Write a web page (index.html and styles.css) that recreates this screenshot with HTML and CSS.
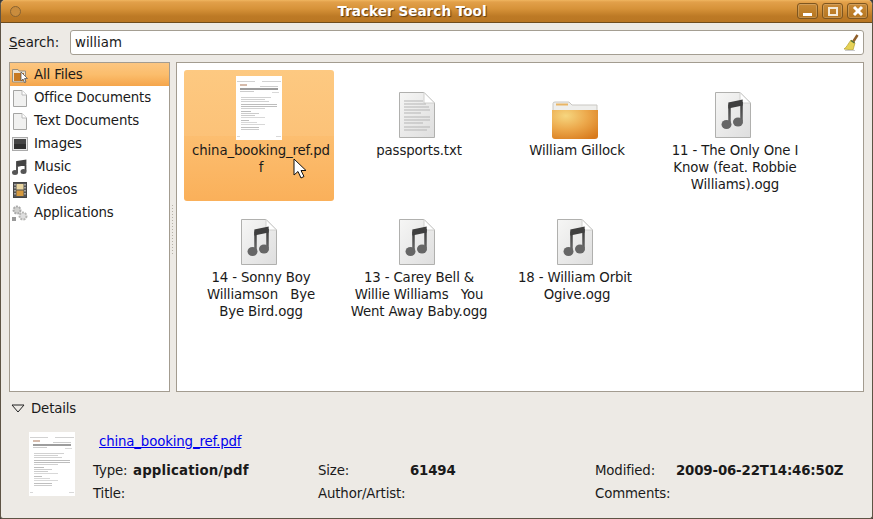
FILE: index.html
```html
<!DOCTYPE html>
<html lang="en">
  <head>
    <meta charset="utf-8">
    <title>Tracker Search Tool</title>
    <link rel="stylesheet" href="styles.css">
  </head>
  <body>
    <svg class="defs" width="0" height="0">
      <defs>
        <linearGradient id="pageFill" x1="0" y1="0" x2="1" y2="1">
          <stop offset="0" stop-color="#f6f6f5"/>
          <stop offset="1" stop-color="#dedede"/>
        </linearGradient>
        <radialGradient id="folderFill" cx=".3" cy=".2" r=".95">
          <stop offset="0" stop-color="#f6d67f"/>
          <stop offset=".5" stop-color="#eca84b"/>
          <stop offset="1" stop-color="#d87a1c"/>
        </radialGradient>
        <linearGradient id="noteFill" x1="0" y1="0" x2="0" y2="1">
          <stop offset="0" stop-color="#3a3a3a"/>
          <stop offset="1" stop-color="#6a6a6a"/>
        </linearGradient>
        <symbol id="page" viewBox="0 0 36 46">
          <path d="M.5.5H25L35.5 11V45.500H.5Z" fill="url(#pageFill)" stroke="#b0b0ae"/>
          <path d="M25 .5V11H35.500Z" fill="#fff" stroke="#d0d0ce"/>
        </symbol>
        <symbol id="musicdoc" viewBox="0 0 36 46">
          <use href="#page" width="36" height="46"/>
          <path d="M14.500 12.500V32M26.500 10V29" stroke="url(#noteFill)" stroke-width="2.500" fill="none"/>
          <path d="M13.300 10.500 27.700 7.500V13.500L13.300 16.500Z" fill="#3f3f3f"/>
          <ellipse cx="11.500" cy="32.500" rx="5" ry="4.500" fill="#666"/>
          <ellipse cx="23" cy="30" rx="5" ry="4.500" fill="#666"/>
        </symbol>
        <symbol id="thumb" viewBox="0 0 46 64">
          <rect width="46" height="64" fill="#fff"/>
          <g class="thumb-lines" fill="#a8a8a8" opacity=".75">
            <rect x="1" y="5" width="18" height="1" fill="#c4c4c4"/>
            <rect x="26" y="5" width="19" height="1" fill="#c4c4c4"/>
            <rect x="4" y="8" width="7" height="2" fill="#c9a58f"/>
            <rect x="24" y="10" width="18" height="1" fill="#bbb"/>
            <rect x="4" y="12" width="38" height="2" fill="#7d7d7d"/>
            <rect x="4" y="15" width="14" height="1" fill="#bbb"/>
            <rect x="36" y="16" width="7" height="1" fill="#ccc"/>
            <rect x="5" y="21" width="30" height="1" fill="#c2c2c2"/>
            <rect x="5" y="23" width="24" height="1" fill="#c2c2c2"/>
            <rect x="5" y="25" width="28" height="1" fill="#c2c2c2"/>
            <rect x="5" y="28" width="36" height="1"/>
            <rect x="5" y="30" width="36" height="1"/>
            <rect x="5" y="32" width="24" height="1" fill="#c2c2c2"/>
            <rect x="5" y="35" width="10" height="1"/>
            <rect x="5" y="37" width="18" height="1" fill="#bbb"/>
            <rect x="5" y="39" width="14" height="1" fill="#bbb"/>
            <rect x="5" y="41" width="24" height="1" fill="#ccc"/>
            <rect x="5" y="44" width="8" height="1" fill="#aaa"/>
            <rect x="5" y="46" width="16" height="1" fill="#ccc"/>
            <rect x="5" y="48" width="24" height="1" fill="#ccc"/>
            <rect x="5" y="51" width="18" height="1" fill="#aaa"/>
            <rect x="5" y="53" width="18" height="1" fill="#bbb"/>
            <rect x="1" y="60" width="3" height="1" fill="#ccc"/>
            <rect x="40" y="60" width="5" height="1" fill="#ccc"/>
          </g>
        </symbol>
      </defs>
    </svg>

    <div class="window">
      <header class="titlebar">
        <span class="menu-dot"></span>
        <span class="title">Tracker Search Tool</span>
        <div class="wm-buttons">
          <span class="wm-btn"><i class="wm-min"></i></span>
          <span class="wm-btn"><i class="wm-max"></i></span>
          <span class="wm-btn">
            <svg width="12" height="12" viewBox="0 0 12 12"><path d="M2 2 10 10M10 2 2 10" stroke="#fff" stroke-width="3"/></svg>
          </span>
        </div>
      </header>

      <div class="search-row">
        <label class="search-label"><u>S</u>earch:</label>
        <div class="search-box">
          <span>william</span>
          <svg class="broom" width="16" height="18" viewBox="0 0 16 18">
            <path d="M14.500 1 10 8" stroke="#8f5f2a" stroke-width="2.500"/>
            <path d="M8 6 12 9 10 16 1 15C3.500 13.500 5 10 8 6Z" fill="#e6d255" stroke="#b39f2c" stroke-width=".7"/>
            <path d="M8 6.500 11.500 9" stroke="#4e6b3a" stroke-width="1.500"/>
            <path d="M2 16.500H12" stroke="#ccc" stroke-width="1"/>
          </svg>
        </div>
      </div>

      <div class="panes">
        <ul class="sidebar">
          <li class="side-row selected">
            <svg width="18" height="18" viewBox="0 0 18 18">
              <path d="M1.500 3.500H7L8 5H14.500V16H1.500Z" fill="#e9e4d8" stroke="#9a8f7c"/>
              <rect x="3" y="7" width="10" height="8" fill="#c77a22"/>
              <path d="M10 6V15L12 13 13.500 16.500 15 16 13.500 12.500H16.500Z" fill="#fff" stroke="#555" stroke-width=".8"/>
            </svg>
            All Files
          </li>
          <li class="side-row">
            <svg width="18" height="18" viewBox="0 0 18 18">
              <path d="M2.500 1.500H11L15.500 6V17.500H2.500Z" fill="#f1f1f0" stroke="#a5a5a3"/>
              <path d="M11 1.500V6H15.500" fill="#fff" stroke="#bbb"/>
            </svg>
            Office Documents
          </li>
          <li class="side-row">
            <svg width="18" height="18" viewBox="0 0 18 18">
              <path d="M2.500 1.500H11L15.500 6V17.500H2.500Z" fill="#f1f1f0" stroke="#a5a5a3"/>
              <path d="M11 1.500V6H15.500" fill="#fff" stroke="#bbb"/>
            </svg>
            Text Documents
          </li>
          <li class="side-row">
            <svg width="18" height="18" viewBox="0 0 18 18">
              <rect x="1.500" y="2.500" width="15" height="13" fill="#e8e8e8" stroke="#aaa"/>
              <rect x="3" y="4" width="12" height="10" fill="#444"/>
              <rect x="3" y="9" width="12" height="5" fill="#2f2f2f"/>
            </svg>
            Images
          </li>
          <li class="side-row">
            <svg width="18" height="18" viewBox="0 0 18 18">
              <path d="M6 4V14M14.500 2.500V13M6 4 14.500 2.500V6L6 8Z" fill="#444" stroke="#444" stroke-width="1.800"/>
              <ellipse cx="4" cy="14.500" rx="3" ry="2.500" fill="#555"/>
              <ellipse cx="12.500" cy="13.500" rx="3" ry="2.500" fill="#555"/>
            </svg>
            Music
          </li>
          <li class="side-row">
            <svg width="18" height="18" viewBox="0 0 18 18">
              <rect x="2.500" y="1.500" width="13" height="15" fill="#555" stroke="#444"/>
              <rect x="5.500" y="3" width="7" height="5.500" fill="#e9d5a0"/>
              <rect x="5.500" y="9.500" width="7" height="5.500" fill="#d69a3f"/>
              <path d="M4 3V15M14 3V15" stroke="#bbb" stroke-width="1.500" stroke-dasharray="1.500 1.500"/>
            </svg>
            Videos
          </li>
          <li class="side-row">
            <svg width="18" height="18" viewBox="0 0 18 18">
              <circle cx="6" cy="6" r="3.500" fill="#d0d0ce" stroke="#aaa" stroke-width="2" stroke-dasharray="2 1"/>
              <circle cx="12" cy="12" r="3.500" fill="#dedede" stroke="#b5b5b3" stroke-width="2" stroke-dasharray="2 1"/>
              <rect x="1" y="13" width="4" height="4" fill="#999"/>
            </svg>
            Applications
          </li>
        </ul>

        <div class="grip"></div>

        <div class="files">
          <div class="file selected">
            <div class="file-icon tall"><svg class="thumb" width="46" height="64"><use href="#thumb"/></svg></div>
            <div class="file-name">china_booking_ref.pd<br>f</div>
          </div>
          <div class="file">
            <div class="file-icon tall">
              <svg width="36" height="46" viewBox="0 0 36 46">
                <use href="#page" width="36" height="46"/>
                <path d="M5 9H24M5 12H27M5 15H30M5 18H31M5 21H22M5 25H31M5 28H31M5 31H24M5 35H31M5 38H28" stroke="#b5b5b5"/>
              </svg>
            </div>
            <div class="file-name">passports.txt</div>
          </div>
          <div class="file">
            <div class="file-icon tall">
              <svg class="folder" width="46" height="38" viewBox="0 0 46 38">
                <path d="M1 2.500Q1 1 3 1H17L20 4H45V12H1Z" fill="#eeeeec" stroke="#c9c7c2"/>
                <rect x="4" y="2.500" width="12" height="2" fill="#e9b565"/>
                <path d="M0 9H46V35Q46 38 43 38H3Q0 38 0 35Z" fill="url(#folderFill)"/>
              </svg>
            </div>
            <div class="file-name">William Gillock</div>
          </div>
          <div class="file">
            <div class="file-icon tall"><svg width="36" height="46"><use href="#musicdoc"/></svg></div>
            <div class="file-name">11 - The Only One I<br>Know (feat. Robbie<br>Williams).ogg</div>
          </div>
          <div class="file">
            <div class="file-icon"><svg width="36" height="46"><use href="#musicdoc"/></svg></div>
            <div class="file-name">14 - Sonny Boy<br>Williamson   Bye<br>Bye Bird.ogg</div>
          </div>
          <div class="file">
            <div class="file-icon"><svg width="36" height="46"><use href="#musicdoc"/></svg></div>
            <div class="file-name">13 - Carey Bell &amp;<br>Willie Williams   You<br>Went Away Baby.ogg</div>
          </div>
          <div class="file">
            <div class="file-icon"><svg width="36" height="46"><use href="#musicdoc"/></svg></div>
            <div class="file-name">18 - William Orbit <br>Ogive.ogg</div>
          </div>
          <svg class="cursor" width="14" height="22" viewBox="0 0 14 22">
            <path d="M1 1V17L5 13.500 8 20 11 18.500 8 12.500H13Z" fill="#fff" stroke="#111"/>
          </svg>
        </div>
      </div>

      <div class="expander">
        <svg width="14" height="9" viewBox="0 0 14 9"><path d="M1 1H13L7 8Z" fill="none" stroke="#222"/></svg>
        Details
      </div>

      <div class="details">
        <svg class="details-thumb" width="46" height="64"><use href="#thumb"/></svg>
        <div class="details-info">
          <a class="details-link" href="#">china_booking_ref.pdf</a>
          <div class="details-grid">
            <span>Type:</span><b class="mime">application/pdf</b>
            <span>Size:</span><b>61494</b>
            <span>Modified:</span><b>2009-06-22T14:46:50Z</b>
            <span>Title:</span><b></b>
            <span>Author/Artist:</span><b></b>
            <span>Comments:</span><b></b>
          </div>
        </div>
      </div>
    </div>
  </body>
</html>
```

FILE: styles.css
```css
* {margin: 0; padding: 0; box-sizing: border-box;}

body {
	background: #3c3b37;
	font: 13.33px "DejaVu Sans", sans-serif;
	letter-spacing: -.15px;
	color: #1a1a1a;
	height: 519px;
	overflow: hidden;
}
.defs {position: absolute;}

.window {
	height: 519px;
	display: flex;
	flex-direction: column;
	background: #edeae5;
	border: 1px solid #5e5445;
	border-top: 0;
	border-radius: 5px 5px 3px 3px;
	overflow: hidden;
}

/* title bar */
.titlebar {
	height: 23px;
	flex: none;
	display: flex;
	align-items: center;
	padding: 0 4px 0 9px;
	background: linear-gradient(#f0b660 0, #e2a04a 2px, #d69238 9px, #bd7a26 16px, #b97623 22px);
	border-bottom: 1px solid #6f4c1c;
}
.menu-dot {
	width: 11px;
	height: 11px;
	border-radius: 50%;
	background: #c98c3d;
	border: 1px solid #8a6432;
}
.title {
	flex: 1;
	text-align: center;
	font-weight: bold;
	font-size: 13.6px;
	letter-spacing: 0;
	color: #fff;
	text-shadow: 1px 1px 1px #5c3a10;
	padding: 0 0 1px 6px;
}
.wm-buttons {display: flex; gap: 4px;}
.wm-btn {
	width: 21px;
	height: 16px;
	display: flex;
	align-items: center;
	justify-content: center;
	border: 1px solid #7e561f;
	border-radius: 3px;
	background: linear-gradient(#c98a37, #b5751f);
	box-shadow: inset 0 0 0 1px rgba(255,255,255,.18);
}
.wm-min {width: 9px; height: 3px; background: #fff; margin-top: 6px;}
.wm-max {width: 10px; height: 9px; border: 2px solid #f4ead8;}

/* search */
.search-row {
	flex: none;
	display: flex;
	align-items: center;
	gap: 8px;
	padding: 7px 8px;
	letter-spacing: 0;
}
.search-label {width: 53px;}
.search-box {
	flex: 1;
	height: 25px;
	display: flex;
	align-items: center;
	justify-content: space-between;
	padding: 0 4px;
	background: #fff;
	border: 1px solid #a49e92;
	border-radius: 3px;
}

/* panes */
.panes {
	flex: none;
	height: 330px;
	display: flex;
	padding: 0 8px;
}
.sidebar {
	width: 161px;
	flex: none;
	list-style: none;
	background: #fff;
	border: 1px solid #a39c90;
}
.side-row {
	height: 23px;
	display: flex;
	align-items: center;
	gap: 5px;
	padding-left: 1px;
}
.side-row svg {flex: none;}
.side-row.selected {background: linear-gradient(#fcc681, #fbbd6c 50%, #f5a54b);}

.grip {
	width: 6px;
	flex: none;
	margin: 142px 0 138px;
	background-image: radial-gradient(#b5b0a6 .8px, transparent 1px);
	background-size: 3px 3px;
	background-position: 1px 0;
	background-repeat: repeat-y;
}

.files {
	flex: 1;
	position: relative;
	background: #fff;
	border: 1px solid #a39c90;
	padding: 7px;
	display: grid;
	grid-template-columns: repeat(4, 150px);
	gap: 8px;
	align-content: start;
}
.file {
	border-radius: 3px;
	text-align: center;
	padding: 6px 0 8px;
}
.file.selected {background: linear-gradient(#fdc981, #fcc278 50%, #fcbe70 50.5%, #fab05a);}
.file-icon {
	height: 52px;
	display: flex;
	align-items: flex-end;
	justify-content: center;
	margin-bottom: 2px;
}
.file-icon.tall {height: 64px;}
.file-icon svg {display: block; margin-bottom: 2px;}
.file-icon svg.thumb {margin-bottom: 0;}
.file-icon svg.folder {margin-bottom: 1px;}
.file-name {
	line-height: 17px;
	white-space: pre-wrap;
	padding-left: 4px;
}
.thumb-lines {filter: blur(.35px);}
.cursor {
	position: absolute;
	left: 116px;
	top: 95px;
}

/* details */
.expander {
	flex: none;
	height: 17px;
	margin-top: 8px;
	display: flex;
	align-items: center;
	gap: 6px;
	padding-left: 10px;
}
.details {
	flex: 1;
	display: flex;
	padding: 15px 0 0 28px;
}
.details-thumb {flex: none;}
.details-info {padding-left: 18px; flex: 1;}
.details-link {
	display: block;
	margin: 1px 0 0 6px;
	color: #0000ee;
	line-height: 17px;
}
.details-grid {
	display: grid;
	grid-template-columns: 40px 185px 92px 185px 81px 1fr;
	grid-auto-rows: 23px;
	margin-top: 9px;
	align-items: center;
}
.mime {letter-spacing: .15px;}
```
